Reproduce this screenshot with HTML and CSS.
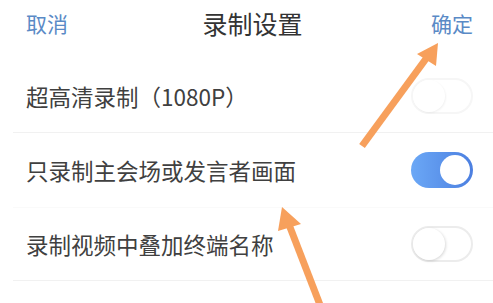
FILE: index.html
```html
<!DOCTYPE html>
<html>
<head>
  <meta charset="UTF-8">
  <title>录制设置</title>
  <link rel="stylesheet" href="styles.css">
</head>
<body>
  <div class="screen">
    <div class="header">
      <span class="header-btn">取消</span>
      <span class="header-title">录制设置</span>
      <span class="header-btn">确定</span>
    </div>

    <div class="settings">
      <div class="setting-row">
        <span class="setting-label">超高清录制（1080P）</span>
        <span class="switch switch-faint"><span class="knob"></span></span>
      </div>
      <div class="setting-row row-light">
        <span class="setting-label">只录制主会场或发言者画面</span>
        <span class="switch switch-on"><span class="knob"></span></span>
      </div>
      <div class="setting-row">
        <span class="setting-label">录制视频中叠加终端名称</span>
        <span class="switch"><span class="knob"></span></span>
      </div>
    </div>

    <!-- annotation arrows drawn over the screenshot -->
    <svg class="arrows" width="493" height="303" viewBox="0 0 493 303">
      <g stroke="#f7a05c" stroke-width="7" stroke-linecap="butt" fill="#f7a05c">
        <line x1="362" y1="146" x2="428" y2="56"></line>
        <line x1="322" y1="310" x2="288" y2="222"></line>
      </g>
      <g fill="#f7a05c">
        <polygon points="438,43 436,66 417,54"></polygon>
        <polygon points="282,207 301,224 278,231"></polygon>
      </g>
    </svg>
  </div>
</body>
</html>
```

FILE: styles.css
```css
body {
  margin: 0;
  font-family: "Noto Sans CJK SC", "Noto Sans", sans-serif;
  background-color: #fff;
  color: #3d3d3d;
}

.screen {
  position: relative;
  width: 493px;
  height: 303px;
  overflow: hidden;
}

.header {
  height: 46px;
  display: flex;
  align-items: center;
  justify-content: space-between;
  padding: 0 20px 0 26px;
}

.header-btn {
  font-size: 21px;
  color: #5a8ac6;
}

.header-title {
  font-size: 25px;
  color: #333;
  margin-left: 6px;
}

.settings {
  margin-top: 14px;
  padding-left: 13px;
}

.setting-row {
  height: 72px;
  display: flex;
  align-items: center;
  justify-content: space-between;
  padding: 0 20px 0 13px;
  border-bottom: 1px solid #f1f1f1;
}

.row-light {
  height: 74px;
  border-bottom-color: #fafafa;
}

.setting-label {
  font-size: 22.5px;
  color: #404040;
}

/* toggle switch */
.switch {
  position: relative;
  width: 62px;
  height: 36px;
  box-sizing: border-box;
  border: 2px solid #ececec;
  border-radius: 18px;
  background-color: #fff;
}

.switch .knob {
  position: absolute;
  top: 0;
  left: 0;
  width: 32px;
  height: 32px;
  border-radius: 50%;
  background-color: #fff;
  box-shadow: 1px 1px 3px rgba(0,0,0,0.15);
}

.switch-faint {
  border-color: #f6f6f6;
}

.switch-faint .knob {
  box-shadow: 1px 1px 2px rgba(0,0,0,0.05);
}

.switch-on {
  border: none;
  background: linear-gradient(to right, #6ba8f6, #4c7fe0);
}

.switch-on .knob {
  top: 3px;
  left: 29px;
  width: 30px;
  height: 30px;
  box-shadow: none;
}

.arrows {
  position: absolute;
  top: 0;
  left: 0;
  pointer-events: none;
}
```
